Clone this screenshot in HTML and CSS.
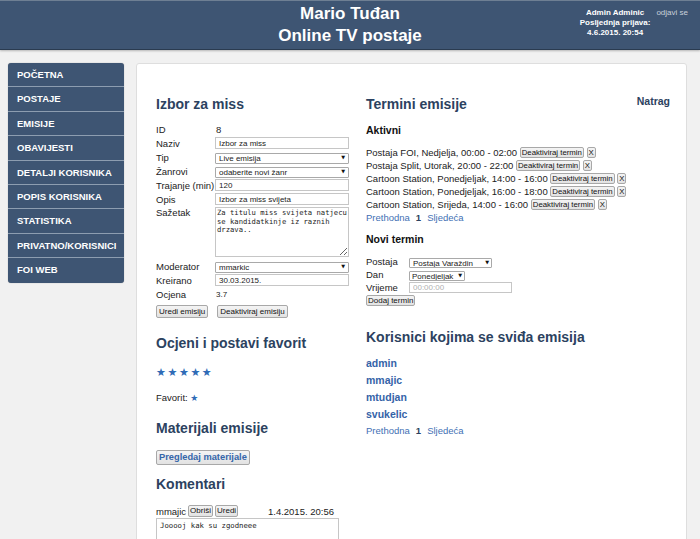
FILE: index.html
```html
<!DOCTYPE html>
<html lang="hr">
<head>
<meta charset="utf-8">
<title>Izbor za miss - Online TV postaje</title>
<link rel="stylesheet" href="styles.css">
</head>
<body>
<header class="topbar">
  <div class="topbar-side"></div>
  <div class="site-title">
    <div>Mario Tuđan</div>
    <div>Online TV postaje</div>
  </div>
  <div class="user-area">
    <div class="user-info">
      <div>Admin Adminic</div>
      <div>Posljednja prijava:</div>
      <div>4.6.2015. 20:54</div>
    </div>
    <a class="logout" href="#">odjavi se</a>
  </div>
</header>

<div class="layout">
  <nav class="sidebar">
    <a href="#">Početna</a>
    <a href="#">Postaje</a>
    <a href="#">Emisije</a>
    <a href="#">Obavijesti</a>
    <a href="#">Detalji korisnika</a>
    <a href="#">Popis korisnika</a>
    <a href="#">Statistika</a>
    <a href="#">Privatno/korisnici</a>
    <a href="#">FOI web</a>
  </nav>

  <main class="content">
    <section class="col-left">
      <h2 class="title">Izbor za miss</h2>
      <div class="details">
        <div class="row"><span class="lbl">ID</span><span class="val big">8</span></div>
        <div class="row"><span class="lbl">Naziv</span><input class="inp" type="text" value="Izbor za miss"></div>
        <div class="row"><span class="lbl">Tip</span><span class="sel"><select><option>Live emisija</option></select></span></div>
        <div class="row"><span class="lbl">Žanrovi</span><span class="sel"><select><option>odaberite novi žanr</option></select></span></div>
        <div class="row"><span class="lbl">Trajanje (min)</span><input class="inp" type="text" value="120"></div>
        <div class="row"><span class="lbl">Opis</span><input class="inp" type="text" value="Izbor za miss svijeta"></div>
        <div class="row tall"><span class="lbl">Sažetak</span><textarea class="area">Za titulu miss svijeta natjecu se kandidatkinje iz raznih drzava..</textarea></div>
        <div class="row"><span class="lbl">Moderator</span><span class="sel"><select><option>mmarkic</option></select></span></div>
        <div class="row"><span class="lbl">Kreirano</span><input class="inp" type="text" value="30.03.2015."></div>
        <div class="row"><span class="lbl">Ocjena</span><span class="val">3.7</span></div>
      </div>
      <div class="actions">
        <button class="btn">Uredi emisiju</button>
        <button class="btn">Deaktiviraj emisiju</button>
      </div>

      <h2 class="title rate-title">Ocjeni i postavi favorit</h2>
      <div class="stars">★★★★★</div>
      <div class="favorit">Favorit: <span class="star-small">★</span></div>

      <h2 class="title mat-title">Materijali emisije</h2>
      <button class="btn btn-strong">Pregledaj materijale</button>

      <h2 class="title com-title">Komentari</h2>
      <div class="comment-head">
        <div class="comment-user">mmajic <button class="btn btn-sm">Obriši</button> <button class="btn btn-sm">Uredi</button></div>
        <span class="comment-date">1.4.2015. 20:56</span>
      </div>
      <textarea class="comment-text">Jooooj kak su zgodneee</textarea>
    </section>

    <section class="col-right">
      <div class="right-head">
        <h2 class="title">Termini emisije</h2>
        <a class="back" href="#">Natrag</a>
      </div>
      <h3 class="sub">Aktivni</h3>
      <div class="terms">
        <div class="term">Postaja FOI, Nedjelja, 00:00 - 02:00 <button class="btn btn-xs">Deaktiviraj termin</button> <button class="btn btn-xs">X</button></div>
        <div class="term">Postaja Split, Utorak, 20:00 - 22:00 <button class="btn btn-xs">Deaktiviraj termin</button> <button class="btn btn-xs">X</button></div>
        <div class="term">Cartoon Station, Ponedjeljak, 14:00 - 16:00 <button class="btn btn-xs">Deaktiviraj termin</button> <button class="btn btn-xs">X</button></div>
        <div class="term">Cartoon Station, Ponedjeljak, 16:00 - 18:00 <button class="btn btn-xs">Deaktiviraj termin</button> <button class="btn btn-xs">X</button></div>
        <div class="term">Cartoon Station, Srijeda, 14:00 - 16:00 <button class="btn btn-xs">Deaktiviraj termin</button> <button class="btn btn-xs">X</button></div>
      </div>
      <div class="pager"><a href="#">Prethodna</a><b>1</b><a href="#">Sljedeća</a></div>

      <h3 class="sub new-title">Novi termin</h3>
      <div class="new-form">
        <div class="nrow"><span class="nlbl">Postaja</span><span class="sel sel-sm w-postaja"><select><option>Postaja Varaždin</option></select></span></div>
        <div class="nrow"><span class="nlbl">Dan</span><span class="sel sel-sm w-dan"><select><option>Ponedjeljak</option></select></span></div>
        <div class="nrow"><span class="nlbl">Vrijeme</span><input class="inp inp-sm" type="text" placeholder="00:00:00"></div>
      </div>
      <button class="btn btn-add">Dodaj termin</button>

      <h2 class="title likes-title">Korisnici kojima se sviđa emisija</h2>
      <ul class="users">
        <li><a href="#">admin</a></li>
        <li><a href="#">mmajic</a></li>
        <li><a href="#">mtudjan</a></li>
        <li><a href="#">svukelic</a></li>
      </ul>
      <div class="pager pager2"><a href="#">Prethodna</a><b>1</b><a href="#">Sljedeća</a></div>
    </section>
  </main>
</div>
</body>
</html>
```

FILE: styles.css
```css
* { box-sizing: border-box; }

html, body {
  margin: 0;
  padding: 0;
}

body {
  background: #f1f1f1;
  font-family: "Liberation Sans", Arial, sans-serif;
  font-size: 9.5px;
  color: #222;
  overflow: hidden;
}

a { text-decoration: none; }

/* ---------- header ---------- */
.topbar {
  display: grid;
  grid-template-columns: 1fr auto 1fr;
  height: 50px;
  background: #3e5573;
  border-top: 1px solid #6e7f93;
  border-bottom: 1px solid #2a3b50;
  box-shadow: 0 1px 2px rgba(0,0,0,0.25);
  color: #fff;
}

.site-title {
  padding-top: 2px;
  font-size: 17px;
  font-weight: bold;
  line-height: 22px;
  text-align: center;
}

.user-area {
  display: flex;
  justify-content: flex-end;
  align-items: flex-start;
  gap: 6px;
  padding: 7px 12px 0 0;
  font-size: 8px;
  line-height: 10px;
}

.user-info {
  font-weight: bold;
  text-align: center;
}

.logout {
  color: #c9d1db;
}

/* ---------- layout ---------- */
.layout {
  display: flex;
  align-items: flex-start;
  gap: 12px;
  padding: 13px 13px 0 8px;
}

.sidebar {
  flex: none;
  width: 116px;
  display: flex;
  flex-direction: column;
  background: #3e5573;
  border-radius: 3px;
  box-shadow: 0 0 1px rgba(0,0,0,0.4);
  overflow: hidden;
}

.sidebar a {
  height: 24.4px;
  line-height: 24px;
  padding-left: 9px;
  color: #fff;
  font-weight: bold;
  font-size: 9.5px;
  text-transform: uppercase;
  border-bottom: 1px solid #8d9db0;
  white-space: nowrap;
}

.sidebar a:last-child { border-bottom: none; }

.content {
  flex: 1;
  display: grid;
  grid-template-columns: 194px 1fr;
  column-gap: 16px;
  min-height: 520px;
  padding: 31px 16px 0 19px;
  background: #fff;
  border: 1px solid #dedede;
  border-radius: 3px;
}

.title {
  margin: 0;
  font-size: 14px;
  line-height: 18px;
  font-weight: bold;
  color: #2c4260;
}

/* ---------- left column ---------- */
.details {
  margin-top: 9px;
}

.row {
  display: flex;
  align-items: center;
  height: 14px;
}

.row.tall {
  height: 53px;
  align-items: flex-start;
}

.row.tall .lbl { line-height: 14px; }

.lbl {
  flex: none;
  width: 59px;
  white-space: nowrap;
}

.val { font-size: 8px; padding-left: 1px; }
.val.big { font-size: 9.5px; }

.inp {
  width: 134px;
  height: 12px;
  padding: 0 3px;
  border: 1px solid #c6c6c6;
  font-family: "Liberation Sans", Arial, sans-serif;
  font-size: 8px;
  color: #222;
  background: #fff;
  outline: none;
}

.sel {
  position: relative;
  display: block;
  width: 134px;
  height: 11px;
}

.sel select {
  -webkit-appearance: none;
  appearance: none;
  width: 100%;
  height: 100%;
  padding: 0 3px;
  border: 1px solid #a9a9a9;
  border-radius: 1px;
  background: #fff;
  font-family: "Liberation Sans", Arial, sans-serif;
  font-size: 8px;
  line-height: 9px;
  color: #222;
}

.sel::after {
  content: "▼";
  position: absolute;
  right: 4px;
  top: 0;
  font-family: "DejaVu Sans", sans-serif;
  font-size: 5px;
  line-height: 11px;
  color: #111;
  pointer-events: none;
}

.area {
  display: block;
  width: 134px;
  height: 50px;
  margin-top: 1px;
  padding: 1px 0 0 1px;
  border: 1px solid #c6c6c6;
  font-family: "DejaVu Sans Mono", "Liberation Mono", monospace;
  font-size: 7.2px;
  line-height: 8.5px;
  color: #222;
  overflow: hidden;
  resize: vertical;
}

.actions {
  display: flex;
  gap: 9px;
  margin-top: 4px;
}

.btn {
  height: 13px;
  padding: 0 2px;
  border: 1px solid #a8a8a8;
  border-radius: 2px;
  background: linear-gradient(#f4f4f4, #e2e2e2);
  font-family: "Liberation Sans", Arial, sans-serif;
  font-size: 8px;
  line-height: 11px;
  color: #111;
}

.rate-title { margin-top: 16px; }

.stars {
  margin-top: 14px;
  font-family: "DejaVu Sans", sans-serif;
  font-size: 11px;
  line-height: 14px;
  letter-spacing: 1.6px;
  color: #2f6bb6;
}

.favorit {
  margin-top: 11px;
  line-height: 14px;
}

.star-small {
  font-family: "DejaVu Sans", sans-serif;
  font-size: 9px;
  color: #2f6bb6;
}

.mat-title { margin-top: 14px; }

.btn-strong {
  display: block;
  height: 15px;
  margin-top: 13px;
  padding: 0 2px;
  font-size: 9.3px;
  font-weight: bold;
  color: #3566aa;
}

.com-title { margin-top: 10px; }

.comment-head {
  display: flex;
  justify-content: space-between;
  align-items: center;
  width: 178px;
  height: 14px;
  margin-top: 11px;
}

.comment-user {
  display: flex;
  align-items: center;
  gap: 2px;
}

.btn-sm {
  height: 12px;
  padding: 0 1px;
  font-size: 8px;
  line-height: 10px;
}

.comment-date { font-size: 9.5px; }

.comment-text {
  display: block;
  width: 183px;
  height: 40px;
  margin-top: 0;
  padding: 2px 3px;
  border: 1px solid #c6c6c6;
  font-family: "DejaVu Sans Mono", "Liberation Mono", monospace;
  font-size: 7.3px;
  color: #222;
  resize: none;
}

/* ---------- right column ---------- */
.right-head {
  display: flex;
  justify-content: space-between;
  align-items: flex-start;
}

.back {
  font-size: 10.5px;
  line-height: 12px;
  font-weight: bold;
  color: #2c4260;
}

.sub {
  margin: 11px 0 0;
  font-size: 10.5px;
  line-height: 13px;
  font-weight: bold;
  color: #111;
}

.terms { margin-top: 9px; }

.term {
  height: 13px;
  line-height: 13px;
  white-space: nowrap;
}

.btn-xs {
  height: 11px;
  padding: 0 1px;
  font-size: 7.8px;
  line-height: 9px;
  vertical-align: middle;
  position: relative;
  top: -1px;
}

.pager {
  display: flex;
  gap: 6px;
  line-height: 13px;
  font-size: 9.5px;
}

.pager a { color: #3f70b4; }
.pager b { color: #2c4260; }

.new-title { margin-top: 9px; }

.new-form { margin-top: 9px; }

.nrow {
  display: flex;
  align-items: center;
  height: 13px;
}

.nlbl {
  flex: none;
  width: 43px;
}

.sel-sm { height: 10px; }
.sel-sm::after { line-height: 10px; right: 3px; }
.w-postaja { width: 83px; }
.w-dan { width: 56px; }
.w-dan select { padding-left: 2px; }

.inp-sm {
  width: 103px;
  height: 11px;
  font-size: 8px;
}

.inp-sm::placeholder { color: #b0b0b0; }

.btn-add {
  display: block;
  height: 11px;
  margin-top: 1px;
  padding: 0 1px;
  font-size: 8px;
  line-height: 9px;
}

.likes-title { margin-top: 22px; }

.users {
  list-style: none;
  margin: 9px 0 0;
  padding: 0;
}

.users li {
  height: 17px;
  line-height: 17px;
}

.users a {
  font-size: 10.5px;
  font-weight: bold;
  color: #3563a8;
}

.pager2 { margin-top: 1px; }
```
